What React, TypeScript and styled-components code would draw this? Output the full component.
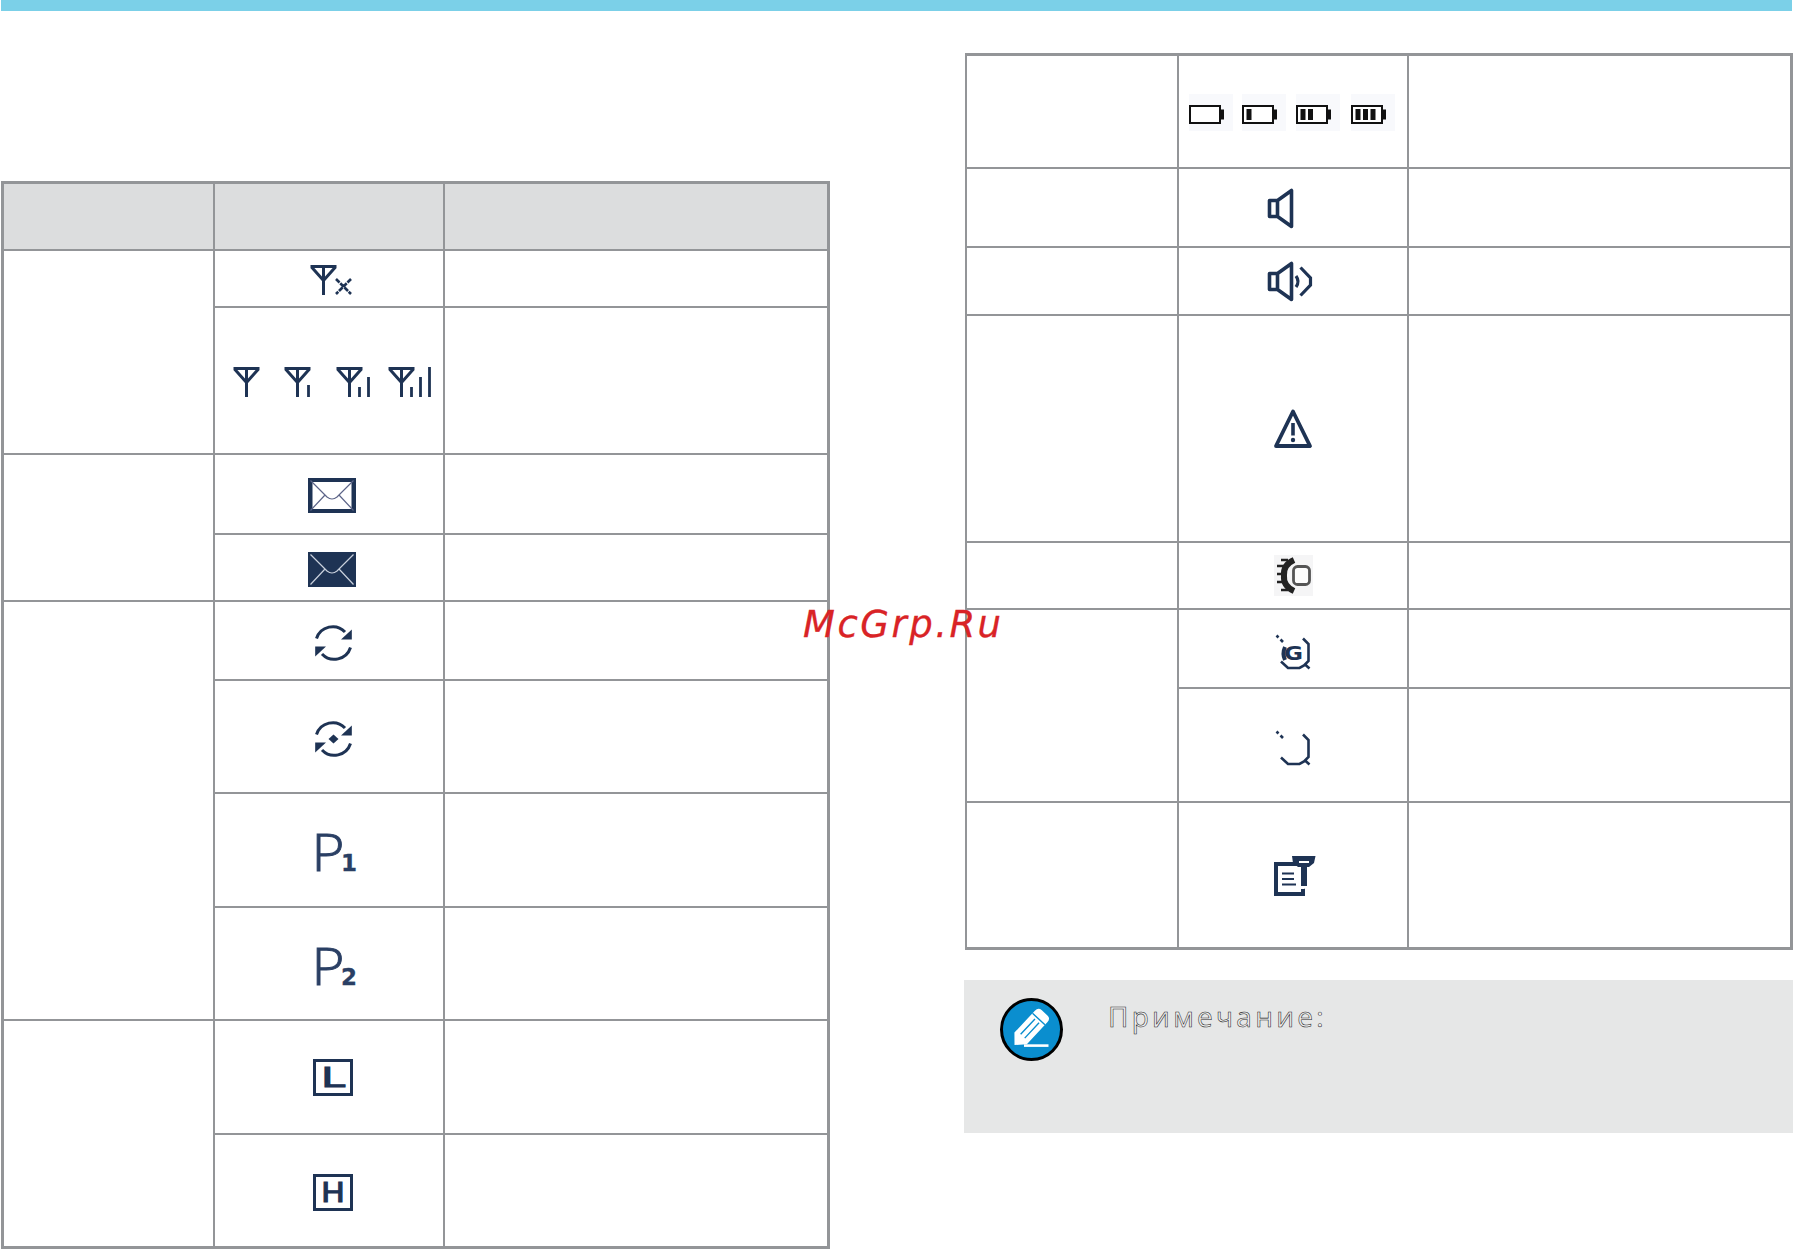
import React from "react";
import styled, { createGlobalStyle } from "styled-components";

const NAVY = "#1e3354";
const LINE = "#939598";

const Global = createGlobalStyle`
  html, body { margin: 0; padding: 0; background: #fff; }
  body { font-family: "Open Sans", "Noto Sans", sans-serif; overflow: hidden; }
`;

const Page = styled.div`
  position: relative;
  width: 1793px;
  height: 1249px;
  overflow: hidden;
`;
const TopBar = styled.div`
  height: 11px;
  margin: 0 1px;
  background: #7bd0e8;
`;
const Columns = styled.div`
  display: flex;
  align-items: flex-start;
  gap: 134px;
  padding-left: 1px;
`;
const LeftColumn = styled.div`
  width: 829px;
  padding-top: 170px;
`;
const RightColumn = styled.div`
  width: 829px;
  padding-top: 42px;
`;
const Grid = styled.table<{ $left: number }>`
  width: 100%;
  table-layout: fixed;
  border-collapse: separate;
  border-spacing: 0;
  border: solid ${LINE};
  border-width: 3px 1px 1px ${(p) => p.$left}px;
`;
const TableInset = styled.div<{ $inset: number }>`
  margin-left: ${(p) => p.$inset}px;
`;
const Row = styled.tr<{ $h: number }>`
  height: ${(p) => p.$h}px;
`;
const Cell = styled.td`
  padding: 0;
  box-sizing: border-box;
  border-right: 2px solid ${LINE};
  border-bottom: 2px solid ${LINE};
  text-align: center;
  vertical-align: middle;
  line-height: 0;
`;
const HeadCell = styled(Cell).attrs({ as: "th" })`
  background: #dcddde;
`;
const Glyph = styled.svg<{ $dx?: number; $dy?: number }>`
  display: inline-block;
  vertical-align: middle;
  overflow: visible;
  margin-left: ${(p) => (p.$dx ?? 0) * 2}px;
  margin-top: ${(p) => (p.$dy ?? 0) * 2}px;
`;
const SoftGlyph = styled(Glyph)`
  filter: blur(0.5px);
`;
const NoteBox = styled.section`
  margin-top: 30px;
  height: 153px;
  box-sizing: border-box;
  background: #e6e7e7;
  display: flex;
  align-items: flex-start;
  gap: 45px;
  padding: 18px 0 0 36px;
`;
const NoteTitle = styled.h2`
  margin: 0;
  margin-top: -2px;
  font: 400 28px/40px "Open Sans", "Noto Sans", sans-serif;
  letter-spacing: 3.3px;
  color: #f1f1f1;
  -webkit-text-stroke: 0.55px #222;
`;
const Watermark = styled.div`
  position: absolute;
  left: 803px;
  top: 601px;
  font: italic 400 37px/48px "DejaVu Sans", sans-serif;
  letter-spacing: 2.5px;
  color: #d92326;
  -webkit-text-stroke: 0.3px #d92326;
  white-space: nowrap;
`;

type Pos = { $dx?: number; $dy?: number };

const AntennaShape = ({ x = 0 }: { x?: number }) => (
  <g transform={`translate(${x} 0)`} fill="none" stroke={NAVY}>
    <path d="M0.5 1.5H26.5M1.5 2L13.5 15.5L25.5 2M13.5 1V30" strokeWidth="3" />
  </g>
);

const AntennaOff = (p: Pos) => (
  <Glyph {...p} width="42" height="30" viewBox="0 0 42 30">
    <AntennaShape />
    <path d="M26 14L41 29M41 14L26 29" stroke={NAVY} strokeWidth="2.6" strokeDasharray="5 1" fill="none" />
  </Glyph>
);
const AntennaLevels = (p: Pos) => (
  <Glyph {...p} width="198" height="30" viewBox="0 0 198 30">
    <AntennaShape />
    <AntennaShape x={51} />
    <path d="M75.5 18V30" stroke={NAVY} strokeWidth="2.8" />
    <AntennaShape x={103} />
    <path d="M126.5 20V30M135.5 10V30" stroke={NAVY} strokeWidth="2.8" />
    <AntennaShape x={155} />
    <path d="M178.5 20V30M187.5 10V30M196.5 0V30" stroke={NAVY} strokeWidth="2.8" />
  </Glyph>
);
const Envelope = ({ filled, ...p }: Pos & { filled?: boolean }) => (
  <Glyph {...p} width="48" height="35" viewBox="0 0 48 35">
    <rect width="48" height="35" fill={NAVY} />
    {!filled && <rect x="4.5" y="4" width="39" height="27" fill="#fff" />}
    <path
      d="M2.5 2.5L19 19Q24 23 29 19L45.5 2.5M2.5 32.5L17 17M45.5 32.5L31 17"
      fill="none"
      stroke={filled ? "#c9d0dc" : "#5c6488"}
      strokeWidth="1.2"
    />
  </Glyph>
);
const SyncHalf = () => (
  <>
    <path d="M1.5 13.5A17 17 0 0 1 30 7" fill="none" stroke={NAVY} strokeWidth="3" />
    <path d="M36.8 4.5V14.5H26Z" fill={NAVY} />
  </>
);
const Sync = ({ dot, ...p }: Pos & { dot?: boolean }) => (
  <Glyph {...p} width="37" height="36" viewBox="0 0 37 36">
    <SyncHalf />
    <g transform="rotate(180 18.5 18)">
      <SyncHalf />
    </g>
    {dot && <path d="M18.5 13.5L23.5 18L18.5 22.5L13.5 18Z" fill={NAVY} />}
  </Glyph>
);
const SvgLetter = styled.text`
  fill: #2a3f64;
  stroke: #2a3f64;
`;
const Profile = ({ n, ...p }: Pos & { n: string }) => (
  <Glyph {...p} width="40" height="37" viewBox="0 0 40 37">
    <SvgLetter
      x="-4.5"
      y="36.5"
      fontFamily="Open Sans"
      fontWeight="300"
      fontSize="51"
      strokeWidth="0.9"
      textLength="33"
      lengthAdjust="spacingAndGlyphs"
    >
      P
    </SvgLetter>
    <SvgLetter
      x="25"
      y="36.5"
      fontFamily="DejaVu Sans"
      fontWeight="700"
      fontSize="23"
      strokeWidth="0.3"
      textLength="16"
      lengthAdjust="spacingAndGlyphs"
    >
      {n}
    </SvgLetter>
  </Glyph>
);
const Power = ({ c, ...p }: Pos & { c: string }) => (
  <Glyph {...p} width="40" height="37" viewBox="0 0 40 37">
    <rect x="1.5" y="1.5" width="37" height="34" fill="none" stroke={NAVY} strokeWidth="3" />
    <text
      x="8"
      y="28"
      fill={NAVY}
      stroke={NAVY}
      strokeWidth="1"
      fontFamily="DejaVu Sans"
      fontWeight="400"
      fontSize="26"
      textLength="24"
      lengthAdjust="spacingAndGlyphs"
    >
      {c}
    </text>
  </Glyph>
);
const Batteries = (p: Pos) => (
  <SoftGlyph {...p} width="207" height="37" viewBox="0 0 207 37">
    {[0, 53, 107, 162].map((x, i) => (
      <g key={x} transform={`translate(${x} 0)`}>
        <rect width="44" height="37" fill="#f8f9fc" />
        <rect x="1" y="12" width="30" height="17" fill="#fff" stroke="#111" strokeWidth="2" />
        <rect x="31" y="15.5" width="4" height="10" fill="#111" />
        {Array.from({ length: i }).map((_, b) => (
          <rect key={b} x={4.5 + b * 7.5} y="15" width="5" height="11" fill="#111" />
        ))}
      </g>
    ))}
  </SoftGlyph>
);
const cone = "M1.5 11.5H9.5L23.5 1.5V37.5L9.5 27.5H1.5ZM9.5 11.5V27.5";
const Speaker = (p: Pos) => (
  <Glyph {...p} width="25" height="39" viewBox="0 0 25 39">
    <path d={cone} fill="none" stroke={NAVY} strokeWidth="3.6" strokeLinejoin="round" />
  </Glyph>
);
const SpeakerLoud = (p: Pos) => (
  <Glyph {...p} width="44" height="39" viewBox="0 0 44 39">
    <path d={cone} fill="none" stroke={NAVY} strokeWidth="3.6" strokeLinejoin="round" />
    <path d="M28 14Q32 19.5 28 25M32.5 5.5L42.5 16V23L32.5 33.5" fill="none" stroke={NAVY} strokeWidth="3.2" />
  </Glyph>
);
const Warning = (p: Pos) => (
  <Glyph {...p} width="38" height="39" viewBox="0 0 38 39">
    <path d="M19 2.5L36 37H2Z" fill="none" stroke={NAVY} strokeWidth="3.8" strokeLinejoin="round" />
    <path d="M19 14V26.5" stroke={NAVY} strokeWidth="3.6" />
    <circle cx="19" cy="31" r="2.2" fill={NAVY} />
  </Glyph>
);
const Lamp = (p: Pos) => (
  <SoftGlyph {...p} width="39" height="41" viewBox="0 0 39 41">
    <rect width="39" height="41" fill="#f5f5f6" />
    <path d="M20 5Q9 10 10 20.5Q9 31 20 36" fill="none" stroke="#222" strokeWidth="6" />
    <path d="M3 11H12M3 19H10M3 27H10M7 35H14M7 5H14" stroke="#222" strokeWidth="2.6" />
    <rect x="19.5" y="11.5" width="16" height="18" rx="4" fill="#fdfdfd" stroke="#555" strokeWidth="2.8" />
  </SoftGlyph>
);
const ring = "M0.5 0.5L2.5 2.5M4.5 4.5L7 7M27 3.5L32.5 9V26L28 30.5L23.5 33H12L5 26.5M28.5 29L33.5 33.5";
const RingG = (p: Pos) => (
  <Glyph {...p} width="34" height="34" viewBox="0 0 34 34">
    <path d={ring} fill="none" stroke={NAVY} strokeWidth="2.6" />
    <path d="M9 12Q6 18.5 9 25" fill="none" stroke={NAVY} strokeWidth="4" />
    <text x="8" y="25" fill={NAVY} fontFamily="DejaVu Sans" fontWeight="700" fontSize="20" textLength="19" lengthAdjust="spacingAndGlyphs">
      G
    </text>
  </Glyph>
);
const RingOnly = (p: Pos) => (
  <Glyph {...p} width="34" height="34" viewBox="0 0 34 34">
    <path d={ring} fill="none" stroke={NAVY} strokeWidth="2.6" />
  </Glyph>
);
const Doc = (p: Pos) => (
  <Glyph {...p} width="42" height="40" viewBox="0 0 42 40">
    <rect y="6" width="31" height="34" fill={NAVY} />
    <rect x="4" y="10" width="23" height="26" fill="#fff" />
    <path d="M8 17.5H20M8 23H20M8 28.5H22" stroke={NAVY} strokeWidth="2" />
    <path d="M18 0H41.5L40 7L35 11H24L19 7Z" fill={NAVY} />
    <path d="M24 11H36V15L34.5 15V31L30 33H24Z" fill="#fff" />
    <rect x="27" y="10" width="6" height="20" fill={NAVY} />
    <path d="M25 6H35" stroke="#fff" strokeWidth="2" />
  </Glyph>
);
const NoteIcon = () => (
  <Glyph width="63" height="63" viewBox="0 0 63 63">
    <circle cx="31.5" cy="31.5" r="30" fill="#0a8ecf" stroke="#000" strokeWidth="3" />
    <g transform="translate(14.5 47) rotate(-47)">
      <path d="M0 0L9 -8.5H39Q44 -8.5 44 -4V4Q44 8.5 39 8.5H9Z" fill="#fff" />
      <path d="M12 -2.8H33M12 2.8H33M35.5 -8.5V8.5" stroke="#0a8ecf" strokeWidth="1.4" fill="none" />
    </g>
    <path d="M24 47.6H48.5" stroke="#fff" strokeWidth="2.6" />
  </Glyph>
);

type RowData = { h: number; rowSpan?: number; head?: boolean; icon?: React.ReactNode };

const leftRows: RowData[] = [
  { h: 67, head: true },
  { h: 57, rowSpan: 2, icon: <AntennaOff $dx={2} $dy={1.5} /> },
  { h: 147, icon: <AntennaLevels $dx={3} $dy={1.5} /> },
  { h: 80, rowSpan: 2, icon: <Envelope $dx={3} $dy={1.5} /> },
  { h: 67, icon: <Envelope filled $dx={3} $dy={2} /> },
  { h: 79, rowSpan: 4, icon: <Sync $dx={4.5} $dy={2} /> },
  { h: 113, icon: <Sync dot $dx={4.5} $dy={2} /> },
  { h: 114, icon: <Profile n="1" $dx={7} $dy={2} /> },
  { h: 113, icon: <Profile n="2" $dx={7} $dy={2.5} /> },
  { h: 114, rowSpan: 2, icon: <Power c="L" $dx={4} $dy={0.5} /> },
  { h: 113, icon: <Power c="H" $dx={4} $dy={1.5} /> },
];
const rightRows: RowData[] = [
  { h: 113, rowSpan: 1, icon: <Batteries $dx={-0.5} $dy={0.5} /> },
  { h: 79, rowSpan: 1, icon: <Speaker $dx={-12.5} $dy={0.5} /> },
  { h: 68, rowSpan: 1, icon: <SpeakerLoud $dx={-3} $dy={0.5} /> },
  { h: 227, rowSpan: 1, icon: <Warning /> },
  { h: 67, rowSpan: 1, icon: <Lamp /> },
  { h: 79, rowSpan: 2, icon: <RingG $dy={3.5} /> },
  { h: 114, icon: <RingOnly $dy={3} /> },
  { h: 146, rowSpan: 1, icon: <Doc $dx={2} $dy={1} /> },
];

const IconTable = ({ rows, widths, left }: { rows: RowData[]; widths: number[]; left: number }) => (
  <Grid $left={left}>
    <colgroup>
      {widths.map((w) => (
        <col key={w} width={w} />
      ))}
    </colgroup>
    <tbody>
      {rows.map((r, i) =>
        r.head ? (
          <Row key={i} $h={r.h}>
            <HeadCell />
            <HeadCell />
            <HeadCell />
          </Row>
        ) : (
          <Row key={i} $h={r.h}>
            {r.rowSpan && <Cell rowSpan={r.rowSpan} />}
            <Cell>{r.icon}</Cell>
            <Cell />
          </Row>
        )
      )}
    </tbody>
  </Grid>
);

export default function App() {
  return (
    <Page>
      <Global />
      <TopBar />
      <Columns>
        <LeftColumn>
          <IconTable rows={leftRows} widths={[211, 230, 384]} left={3} />
        </LeftColumn>
        <RightColumn>
          <TableInset $inset={1}>
            <IconTable rows={rightRows} widths={[212, 230, 383]} left={2} />
          </TableInset>
          <NoteBox>
            <NoteIcon />
            <NoteTitle>Примечание:</NoteTitle>
          </NoteBox>
        </RightColumn>
      </Columns>
      <Watermark>McGrp.Ru</Watermark>
    </Page>
  );
}
